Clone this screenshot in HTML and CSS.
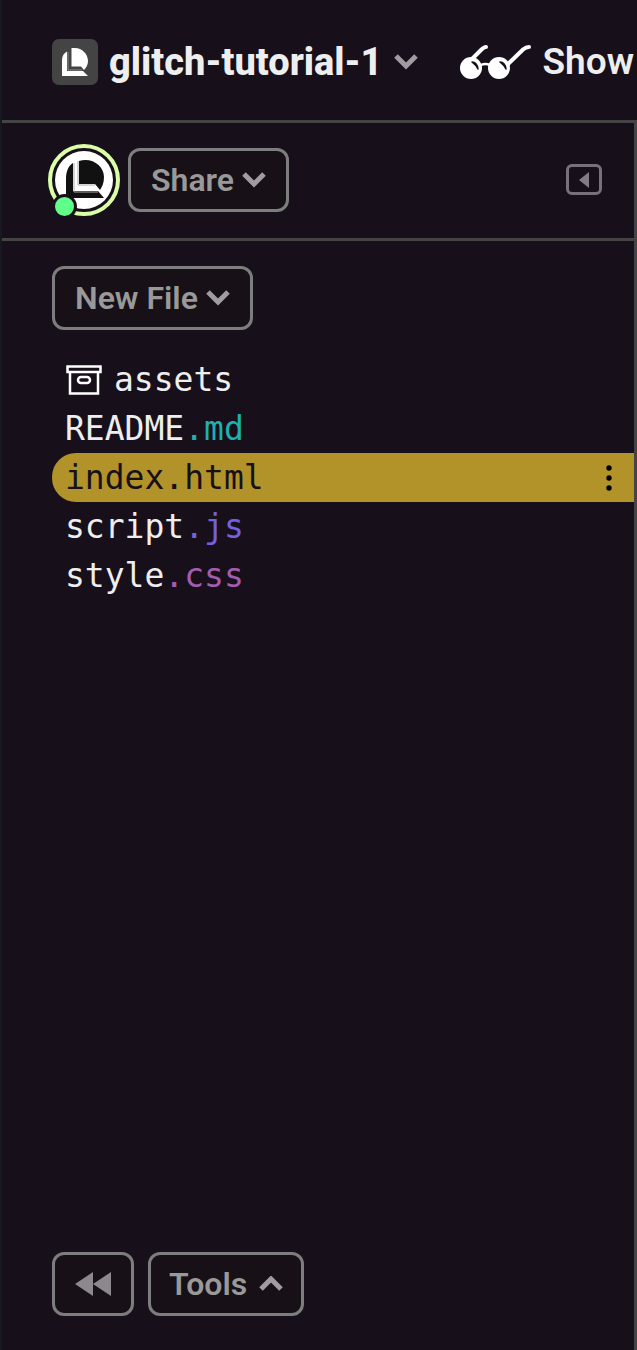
FILE: index.html
```html
<!DOCTYPE html>
<html lang="en">
<head>
    <meta charset="UTF-8">
    <meta name="viewport" content="width=device-width, initial-scale=1.0">
    <title>glitch-tutorial-1</title>
    <link rel="stylesheet" href="styles.css">
</head>
<body>
    <header class="top-bar">
        <button class="project-button">
            <span class="project-avatar">
                <svg width="26" height="28" viewBox="0 0 26 28" fill="#fff">
                    <path d="M5 3.5V23H21L26 28H0V12C0 8 2 5 5 3.5Z"/>
                    <path d="M9.5 0H13C20 0 26 6 26 13C26 17 24 20 22 22L19 18.5H9.5Z"/>
                    <path d="M6 4V22H20" fill="none" stroke="#8a8a8a"/>
                </svg>
            </span>
            <span class="project-name">glitch-tutorial-1</span>
            <svg class="chevron" width="24" height="16" viewBox="0 0 24 16"><path d="M2 2L12 12L22 2"/></svg>
        </button>
        <button class="show-button">
            <svg width="72" height="36" viewBox="0 0 72 36">
                <g fill="none" stroke="#fff" stroke-linecap="round">
                    <path d="M12 15L21 6Q24 3 26 3" stroke-width="4"/>
                    <path d="M47 21L63 5.5Q66 3 69 3" stroke-width="4"/>
                    <path d="M21 21Q25 19 30 21" stroke-width="2.5"/>
                </g>
                <circle cx="11" cy="24" r="11" fill="#fff"/>
                <circle cx="39" cy="24" r="11" fill="#fff"/>
                <path d="M12 18Q17 18 18 25Q16 21 12 18ZM40 18Q45 18 46 25Q44 21 40 18Z" fill="#17101a" stroke="#17101a" stroke-width="1.5" stroke-linejoin="round"/>
            </svg>
            <span>Show</span>
        </button>
    </header>
    <aside class="sidebar">
        <div class="people">
            <div class="user">
                <svg width="72" height="72" viewBox="0 0 72 72">
                    <circle cx="36" cy="36" r="34" fill="#17101a" stroke="#dbffa6" stroke-width="4"/>
                    <circle cx="36" cy="36" r="29" fill="#fff"/>
                    <g fill="#111">
                        <path d="M25 19V47H50L56 54H18V35C18 28 20 22 25 19Z"/>
                        <path d="M31 17C44 13 56 22 56 33C56 39 54 43 52 46L47 40H31Z"/>
                    </g>
                    <path d="M26 19V48H50M30 17V41H47" fill="none" stroke="#aaa"/>
                </svg>
                <span class="online"></span>
            </div>
            <button class="button">Share
                <svg class="chevron" width="24" height="16" viewBox="0 0 24 16"><path d="M2 2L12 12L22 2"/></svg>
            </button>
            <button class="collapse" aria-label="Collapse sidebar">
                <svg width="10" height="16" viewBox="0 0 10 16"><path d="M10 0V16L0 8Z" fill="#807b84"/></svg>
            </button>
        </div>
        <div class="new-file">
            <button class="button">New File
                <svg class="chevron" width="24" height="16" viewBox="0 0 24 16"><path d="M2 2L12 12L22 2"/></svg>
            </button>
        </div>
        <ul class="files">
            <li>
                <a href="#assets">
                    <svg class="box" width="36" height="30" viewBox="0 0 36 30" fill="none" stroke="#fff" stroke-width="2.5">
                        <path d="M1.5 1.5H34.5V7H1.5ZM4 7V28.5H32V7"/>
                        <rect x="12" y="12" width="12" height="6" rx="3"/>
                    </svg>assets</a>
            </li>
            <li><a href="#readme">README<span class="md">.md</span></a></li>
            <li class="active">
                <a href="#index">index.html</a>
                <button class="more" aria-label="File options">
                    <svg width="6" height="26" viewBox="0 0 6 26">
                        <circle cx="3" cy="3" r="2.7"/>
                        <circle cx="3" cy="13" r="2.7"/>
                        <circle cx="3" cy="23" r="2.7"/>
                    </svg>
                </button>
            </li>
            <li><a href="#script">script<span class="js">.js</span></a></li>
            <li><a href="#style">style<span class="css">.css</span></a></li>
        </ul>
        <footer class="tools">
            <button class="button" aria-label="Collapse">
                <svg width="36" height="26" viewBox="0 0 36 26"><path d="M18 1V25L0 13ZM36 1V25L18 13Z" fill="#8d888e"/></svg>
            </button>
            <button class="button tools-button">Tools
                <svg class="chevron" width="24" height="16" viewBox="0 0 24 16"><path d="M2 13L12 3L22 13"/></svg>
            </button>
        </footer>
    </aside>
</body>
</html>
```
FILE: styles.css
```css
* {
    box-sizing: border-box;
}
body {
    margin: 0;
    min-height: 100vh;
    display: flex;
    flex-direction: column;
    background: #17101a;
    color: #eee;
    border-left: 2px solid #151a20;
    font-family: Roboto, "Liberation Sans", sans-serif;
    overflow-x: hidden;
}
button {
    font: inherit;
    color: inherit;
    background: none;
    border: none;
    padding: 0;
    cursor: pointer;
}
svg {
    display: block;
    flex: none;
}
.top-bar {
    display: flex;
    align-items: center;
    gap: 42px;
    height: 123px;
    padding-left: 50px;
    border-bottom: 3px solid #444;
    font-size: 37px;
    line-height: 44px;
}
.project-button,
.show-button {
    display: flex;
    align-items: center;
    gap: 11px;
    white-space: nowrap;
    padding-top: 4px;
}
.project-button {
    font-size: 38px;
    font-weight: 800;
}
.show-button {
    font-weight: 600;
}
.project-avatar {
    display: flex;
    align-items: center;
    justify-content: center;
    width: 46px;
    height: 46px;
    border-radius: 7px;
    background: #444;
}
.chevron {
    fill: none;
    stroke: #a19ca3;
    stroke-width: 5;
}
.sidebar {
    flex: 1;
    display: flex;
    flex-direction: column;
    border-right: 3px solid #444;
}
.people {
    display: flex;
    align-items: center;
    gap: 8px;
    height: 118px;
    padding: 0 32px 2px 46px;
    border-bottom: 3px solid #444;
}
.user {
    position: relative;
}
.online {
    position: absolute;
    left: 4px;
    bottom: -3px;
    width: 25px;
    height: 25px;
    border: 3px solid #17101a;
    border-radius: 50%;
    background: #5fff8a;
}
.button {
    display: flex;
    align-items: center;
    gap: 8px;
    height: 64px;
    padding: 0 20px;
    border: 3px solid #7d7d7d;
    border-radius: 12px;
    background: #171017;
    color: #999;
    font-size: 32px;
    font-weight: 600;
    line-height: 40px;
}
.collapse {
    display: flex;
    align-items: center;
    justify-content: center;
    width: 36px;
    height: 31px;
    margin-left: auto;
    border: 3px solid #77727a;
    border-radius: 6px;
}
.new-file {
    padding: 25px 50px;
    display: flex;
}
.files {
    list-style: none;
    margin: 0;
    padding: 0 0 0 50px;
    font-family: "DejaVu Sans Mono", monospace;
    font-size: 33px;
    line-height: 49px;
}
.files li {
    display: flex;
    align-items: center;
    justify-content: space-between;
    padding: 0 22px 0 13px;
    border-radius: 24px 0 0 24px;
}
.files a {
    display: flex;
    align-items: center;
    color: inherit;
    text-decoration: none;
}
.files .active {
    background: #b19329;
    color: #17101a;
}
.box {
    margin: 0 12px 0 1px;
}
.md {
    color: #1fb0b0;
}
.js {
    color: #7460e0;
}
.css {
    color: #a35dae;
}
.tools {
    display: flex;
    gap: 14px;
    margin-top: auto;
    padding: 34px 50px;
}
.tools-button {
    gap: 12px;
    padding: 0 18px;
}
```
